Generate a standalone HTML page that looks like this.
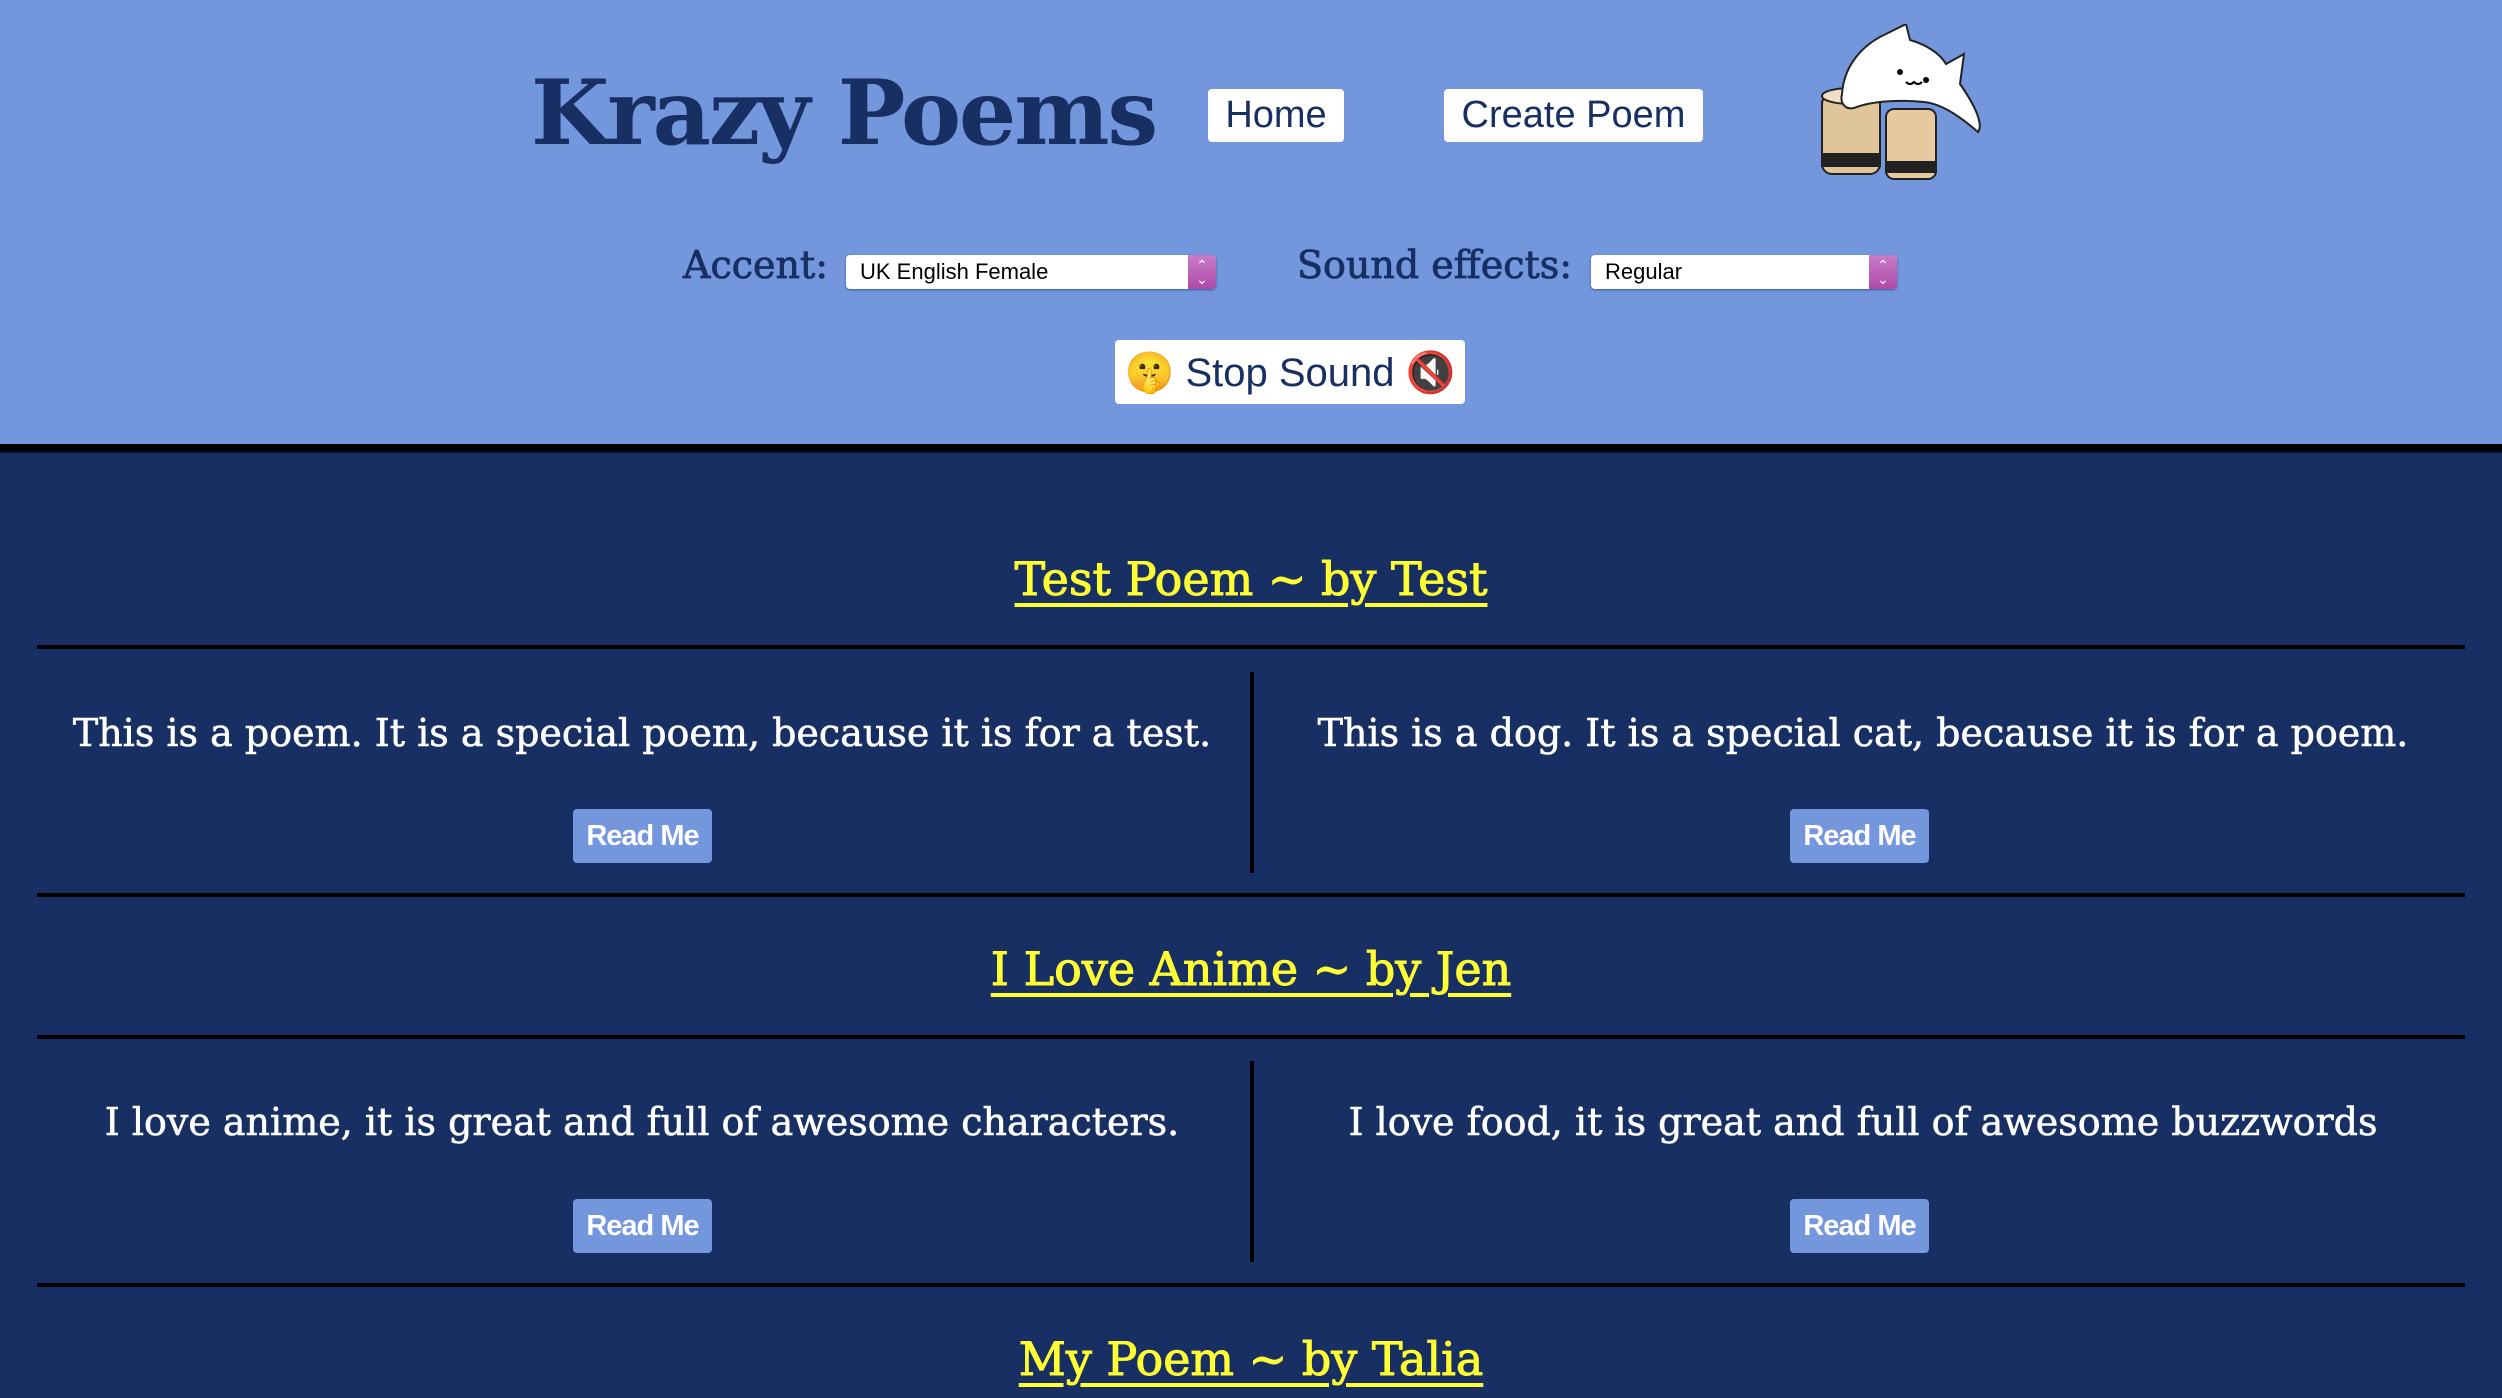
<!DOCTYPE html>
<html><head><meta charset="utf-8"><style>
*{margin:0;padding:0;box-sizing:border-box}
body{width:2502px;height:1398px;overflow:hidden;background:#172f62;font-family:"DejaVu Serif","Liberation Serif",serif;position:relative}
.hdr{position:absolute;left:0;top:0;width:2502px;height:446px;background:#7396dd}
.bar{position:absolute;left:0;top:444px;width:2502px;height:9px;background:linear-gradient(#000 60%,#0a1530)}
.abs{position:absolute}
.title{left:531px;top:60px;font-size:90px;font-weight:bold;color:#172f62;letter-spacing:-2px;white-space:nowrap}
.btn{background:#fff;border-radius:4px;color:#172f62;font-family:"Liberation Sans",sans-serif;font-size:38px;display:flex;align-items:center;justify-content:center}
.lbl{font-size:38px;color:#172f62;white-space:nowrap;-webkit-text-stroke:0.8px #172f62}
.sel{background:#fff;border-radius:4px;font-family:"Liberation Sans",sans-serif;font-size:22px;color:#000;padding-left:14px;display:flex;align-items:center;box-shadow:0 1px 2px #3a5aa0}
.sel .ar{position:absolute;right:0;top:0;width:28px;height:100%;background:linear-gradient(#c77cc8,#b04ba8);border-radius:0 4px 4px 0;color:#fff;font-size:14px;line-height:14px;text-align:center;padding-top:3px}
.pt{width:2502px;text-align:center;color:#ffff33;font-size:46px;-webkit-text-stroke:1px #ffff33;text-decoration:underline;text-decoration-thickness:4px;text-underline-offset:8px;left:0}
.hr{left:37px;width:2428px;height:4px;background:#000}
.vr{left:1250px;width:4px;background:#000}
.txt{color:#fff;font-size:38px;text-align:center;white-space:nowrap;-webkit-text-stroke:0.6px #fff}
.rm{background:#7396dd;border-radius:4px;color:#fff;font-family:"Liberation Sans",sans-serif;font-weight:bold;font-size:29px;width:139px;height:54px;display:flex;align-items:center;justify-content:center;letter-spacing:-1px}
</style></head><body>
<div class="hdr"></div>
<div class="bar"></div>
<div class="abs title">Krazy Poems</div>
<div class="abs btn" style="left:1208px;top:89px;width:136px;height:53px">Home</div>
<div class="abs btn" style="left:1444px;top:89px;width:259px;height:53px">Create Poem</div>
<svg class="abs" style="left:1814px;top:24px" width="180" height="162" viewBox="0 0 180 162">
<g stroke="#222" stroke-width="2">
<rect x="8" y="70" width="58" height="80" rx="10" fill="#e0c49a"/>
<ellipse cx="37" cy="72" rx="29" ry="8" fill="#f0dfc4"/>
<rect x="8" y="130" width="58" height="12" fill="#222"/>
<rect x="72" y="85" width="50" height="70" rx="8" fill="#e6c99f"/>
<rect x="72" y="138" width="50" height="10" fill="#222"/>
<path d="M28 70 C30 40 50 20 72 10 L92 0 L96 16 C110 20 125 28 132 40 L150 30 L146 60 C160 80 170 100 164 108 C150 96 130 80 110 78 C90 76 60 76 40 84 C30 86 26 78 28 70Z" fill="#fff"/>
</g>
<circle cx="86" cy="48" r="3" fill="#000"/><circle cx="112" cy="56" r="3" fill="#000"/>
<path d="M92 58 q4 4 8 0 q4 4 8 0" stroke="#000" stroke-width="2" fill="none"/>
</svg>
<div class="abs lbl" style="left:683px;top:243px">Accent:</div>
<div class="abs sel" style="left:846px;top:255px;width:370px;height:34px">UK English Female<div class="ar">⌃<br>⌄</div></div>
<div class="abs lbl" style="left:1297px;top:243px">Sound effects:</div>
<div class="abs sel" style="left:1591px;top:255px;width:306px;height:34px">Regular<div class="ar">⌃<br>⌄</div></div>
<div class="abs btn" style="left:1115px;top:340px;width:350px;height:64px;font-size:40px">🤫&nbsp;Stop Sound 🔇</div>

<div class="abs pt" style="top:552px">Test Poem ~ by Test</div>
<div class="abs hr" style="top:645px"></div>
<div class="abs vr" style="top:672px;height:201px"></div>
<div class="abs txt" style="left:16px;width:1252px;top:711px">This is a poem. It is a special poem, because it is for a test.</div>
<div class="abs txt" style="left:1252px;width:1222px;top:711px">This is a dog. It is a special cat, because it is for a poem.</div>
<div class="abs rm" style="left:573px;top:809px">Read Me</div>
<div class="abs rm" style="left:1790px;top:809px">Read Me</div>
<div class="abs hr" style="top:893px"></div>

<div class="abs pt" style="top:942px">I Love Anime ~ by Jen</div>
<div class="abs hr" style="top:1035px"></div>
<div class="abs vr" style="top:1061px;height:201px"></div>
<div class="abs txt" style="left:16px;width:1252px;top:1100px">I love anime, it is great and full of awesome characters.</div>
<div class="abs txt" style="left:1252px;width:1222px;top:1100px">I love food, it is great and full of awesome buzzwords</div>
<div class="abs rm" style="left:573px;top:1199px">Read Me</div>
<div class="abs rm" style="left:1790px;top:1199px">Read Me</div>
<div class="abs hr" style="top:1283px"></div>

<div class="abs pt" style="top:1332px">My Poem ~ by Talia</div>
</body></html>
